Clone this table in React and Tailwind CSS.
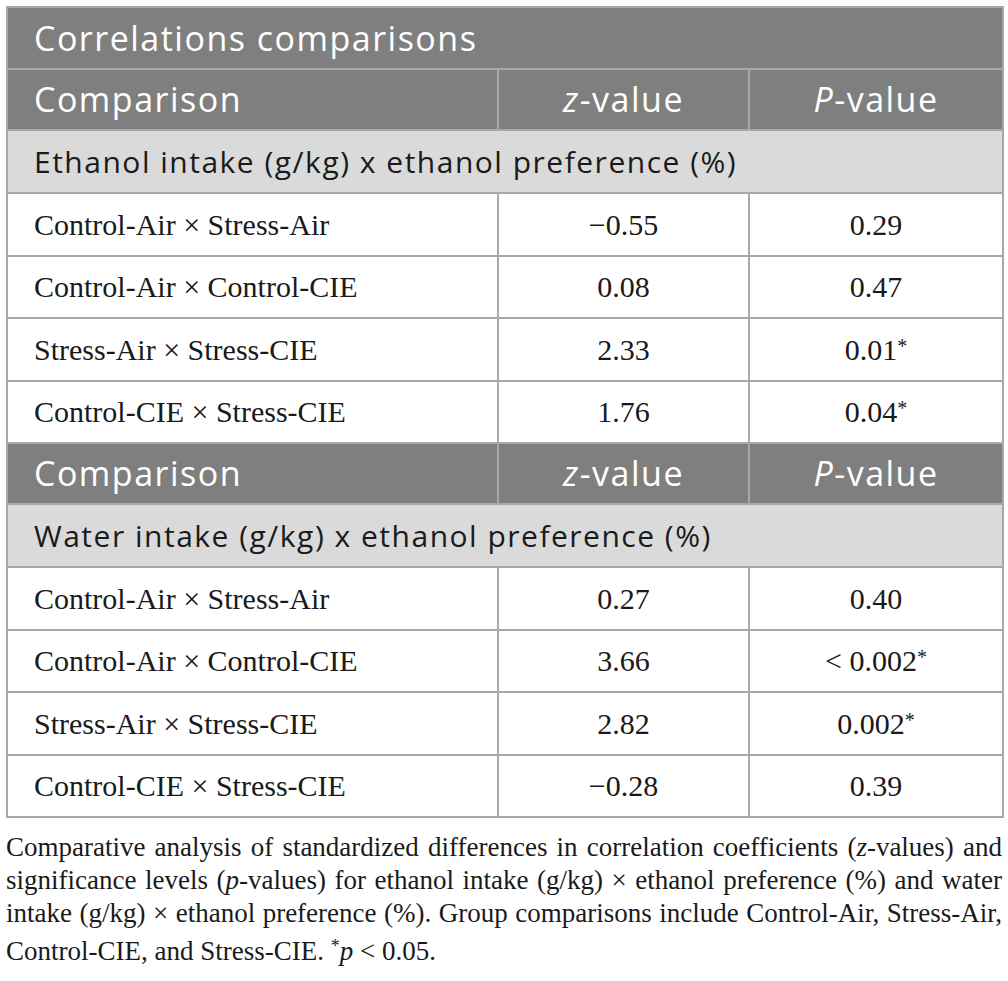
import React from "react";

const sans = { fontFamily: "'Open Sans', Lato, sans-serif", fontVariantLigatures: "none" };

const block1 = [
  ["Control-Air × Stress-Air", "−0.55", "0.29"],
  ["Control-Air × Control-CIE", "0.08", "0.47"],
  ["Stress-Air × Stress-CIE", "2.33", "0.01*"],
  ["Control-CIE × Stress-CIE", "1.76", "0.04*"],
];

const block2 = [
  ["Control-Air × Stress-Air", "0.27", "0.40"],
  ["Control-Air × Control-CIE", "3.66", "< 0.002*"],
  ["Stress-Air × Stress-CIE", "2.82", "0.002*"],
  ["Control-CIE × Stress-CIE", "−0.28", "0.39"],
];

function PVal({ v }) {
  if (v.endsWith("*")) {
    return (
      <>
        {v.slice(0, -1)}
        <span className="text-[20px] align-[7px]">*</span>
      </>
    );
  }
  return v;
}

function HeaderRow() {
  return (
    <tr className="h-[61px] bg-[#7f7f7f] text-white text-[34px] tracking-[1.5px]" style={sans}>
      <td className="border-2 border-[#a8a8a8] pl-[26px]">Comparison</td>
      <td className="border-2 border-[#a8a8a8] text-center">
        <i>z</i>-value
      </td>
      <td className="border-2 border-[#a8a8a8] text-center">
        <i>P</i>-value
      </td>
    </tr>
  );
}

function SubRow({ children }) {
  return (
    <tr className="h-[63px] bg-[#dadada] text-[#1a1a1a] text-[30px] tracking-[1.5px]" style={sans}>
      <td colSpan={3} className="border-2 border-[#a8a8a8] pl-[26px]">
        {children}
      </td>
    </tr>
  );
}

function DataRows({ rows }) {
  return rows.map((r) => (
    <tr key={r[0] + r[1]} className="h-[62.5px] bg-white text-[#1a1a1a] text-[30px] font-['Liberation_Serif',serif]">
      <td className="border-2 border-[#a8a8a8] pl-[26px]">{r[0]}</td>
      <td className="border-2 border-[#a8a8a8] text-center">{r[1]}</td>
      <td className="border-2 border-[#a8a8a8] text-center">
        <PVal v={r[2]} />
      </td>
    </tr>
  ));
}

const lineCls = "text-justify [text-align-last:justify]";

export default function App() {
  return (
    <div className="w-[1008px] min-h-[981px] bg-white pt-[6px] px-[6px]">
      <table className="w-[996px] border-collapse table-fixed">
        <colgroup>
          <col className="w-[491px]" />
          <col className="w-[251px]" />
          <col className="w-[254px]" />
        </colgroup>
        <tbody>
          <tr className="h-[62px] bg-[#7f7f7f] text-white text-[34px] tracking-[1.5px]" style={sans}>
            <td colSpan={3} className="border-2 border-[#a8a8a8] pl-[26px]">
              Correlations comparisons
            </td>
          </tr>
          <HeaderRow />
          <SubRow>Ethanol intake (g/kg) x ethanol preference (%)</SubRow>
          <DataRows rows={block1} />
          <HeaderRow />
          <SubRow>Water intake (g/kg) x ethanol preference (%)</SubRow>
          <DataRows rows={block2} />
        </tbody>
      </table>
      <div className="mt-[13px] text-[27px] leading-[33px] text-[#1a1a1a] font-['Liberation_Serif',serif]">
        <div className={lineCls}>
          Comparative analysis of standardized differences in correlation coefficients (<i>z</i>-values) and
        </div>
        <div className={lineCls}>
          significance levels (<i>p</i>-values) for ethanol intake (g/kg) × ethanol preference (%) and water
        </div>
        <div className={lineCls}>
          intake (g/kg) × ethanol preference (%). Group comparisons include Control-Air, Stress-Air,
        </div>
        <div>
          Control-CIE, and Stress-CIE. <span className="text-[18px] align-[8px]">*</span>
          <i>p</i> &lt; 0.05.
        </div>
      </div>
    </div>
  );
}
